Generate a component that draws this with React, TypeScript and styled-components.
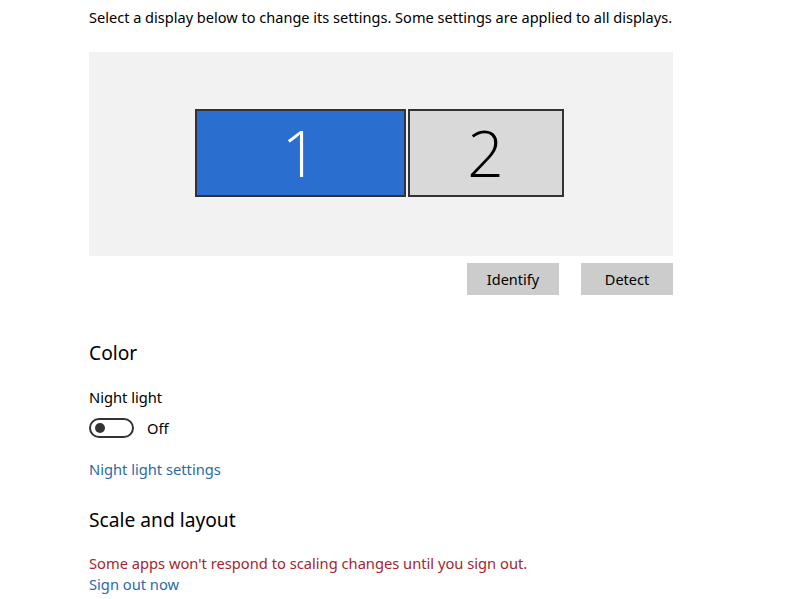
import React from "react"
import styled, { createGlobalStyle } from "styled-components"

const Global = createGlobalStyle`
  html, body {
    margin: 0;
    padding: 0;
    background: #fff;
    font-family: "Noto Sans", "Open Sans", sans-serif;
    color: #000;
  }
`

type Display = { id: number; width: number; selected?: boolean }

const displays: Display[] = [
  { id: 1, width: 211, selected: true },
  { id: 2, width: 156 },
]

export default function App() {
  return (
    <>
      <Global />
      <S.Page>
        <S.Intro>Select a display below to change its settings. Some settings are applied to all displays.</S.Intro>
        <S.Arrangement>
          <S.Monitors>
            {displays.map((d) => (
              <S.Monitor key={d.id} $selected={d.selected} style={{ width: d.width }}>
                {d.id}
              </S.Monitor>
            ))}
          </S.Monitors>
        </S.Arrangement>
        <S.ButtonRow>
          <S.Button>Identify</S.Button>
          <S.Button>Detect</S.Button>
        </S.ButtonRow>

        <S.Heading $top={45}>Color</S.Heading>
        <S.Label>Night light</S.Label>
        <S.ToggleRow>
          <S.Toggle>
            <S.Knob />
          </S.Toggle>
          <S.ToggleText>Off</S.ToggleText>
        </S.ToggleRow>
        <S.Link $top={20}>Night light settings</S.Link>

        <S.Heading $top={27}>Scale and layout</S.Heading>
        <S.Warning>Some apps won't respond to scaling changes until you sign out.</S.Warning>
        <S.Link $top={0}>Sign out now</S.Link>
      </S.Page>
    </>
  )
}

const S = {
  Page: styled.div`
    display: flex;
    flex-direction: column;
    align-items: flex-start;
    width: 584px;
    padding: 6px 0 0 89px;
  `,
  Intro: styled.div`
    font-size: 14.55px;
    line-height: 22px;
    white-space: nowrap;
  `,
  Arrangement: styled.div`
    margin-top: 24px;
    width: 584px;
    height: 204px;
    background: #f2f2f2;
    display: flex;
    justify-content: center;
    padding-top: 57px;
    box-sizing: border-box;
  `,
  Monitors: styled.div`
    display: flex;
    gap: 2px;
    margin-left: -4px;
    height: 88px;
  `,
  Monitor: styled.div<{ $selected?: boolean }>`
    box-sizing: border-box;
    height: 88px;
    border: 2px solid #333;
    background: ${(p) => (p.$selected ? "#2a6fd0" : "#d9d9d9")};
    color: ${(p) => (p.$selected ? "#fff" : "#000")};
    display: flex;
    align-items: center;
    justify-content: center;
    font-family: "Open Sans", sans-serif;
    font-weight: 300;
    font-size: 64px;
    line-height: 1;
  `,
  ButtonRow: styled.div`
    align-self: flex-end;
    display: flex;
    gap: 22px;
    margin-top: 7px;
  `,
  Button: styled.button`
    width: 92px;
    height: 32px;
    border: none;
    background: #cccccc;
    font-family: "Noto Sans", sans-serif;
    font-size: 14.5px;
    color: #000;
    padding: 0;
  `,
  Heading: styled.div<{ $top: number }>`
    margin-top: ${(p) => p.$top}px;
    font-size: 19.2px;
    line-height: 26px;
  `,
  Label: styled.div`
    margin-top: 20px;
    font-size: 14.7px;
    line-height: 22px;
  `,
  ToggleRow: styled.div`
    display: flex;
    align-items: center;
    gap: 13px;
    margin-top: 10px;
  `,
  Toggle: styled.div`
    box-sizing: border-box;
    width: 45px;
    height: 20px;
    border: 2px solid #333;
    border-radius: 10px;
    display: flex;
    align-items: center;
    padding-left: 4px;
  `,
  Knob: styled.div`
    width: 10px;
    height: 10px;
    border-radius: 50%;
    background: #333;
  `,
  ToggleText: styled.span`
    font-size: 14.7px;
    line-height: 20px;
  `,
  Link: styled.div<{ $top: number }>`
    margin-top: ${(p) => p.$top}px;
    font-size: 14.7px;
    line-height: 22px;
    color: #2b6aa8;
  `,
  Warning: styled.div`
    margin-top: 20px;
    font-size: 14.7px;
    line-height: 20px;
    color: #a4262c;
  `,
}
